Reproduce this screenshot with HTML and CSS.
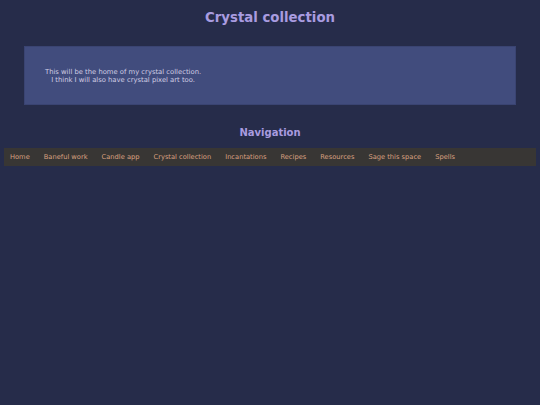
FILE: index.html
```html
<!DOCTYPE html>
<html lang="en">
<head>
    <meta charset="UTF-8">
    <meta name="viewport" content="width=device-width, initial-scale=1.0">
    <title>Crystal collection</title>
    <link rel="stylesheet" href="styles.css">
</head>
<body>

<h1 class="title">Crystal collection</h1>

<div class="content">
    <p class="intro">This will be the home of my crystal collection.<br>I think I will also have crystal pixel art too.</p>
</div>

<h2 class="nav-title">Navigation</h2>

<nav class="nav">
    <a href="#">Home</a>
    <a href="#">Baneful work</a>
    <a href="#">Candle app</a>
    <a href="#">Crystal collection</a>
    <a href="#">Incantations</a>
    <a href="#">Recipes</a>
    <a href="#">Resources</a>
    <a href="#">Sage this space</a>
    <a href="#">Spells</a>
</nav>

</body>
</html>
```

FILE: styles.css
```css
body {
    font-family: "DejaVu Sans", Verdana, sans-serif;
    margin: 0;
    padding: 0 4px;
    background: #262c4a;
    color: #c8c8dc;
}

.title {
    margin: 0;
    padding-top: 9px;
    font-size: 13.3px;
    line-height: 18px;
    text-align: center;
    color: #a99ce0;
}

.content {
    margin: 19px 20px 0;
    background: #414c7d;
    border: 1px solid #3a4472;
    height: 57px;
    display: flex;
    align-items: center;
    padding-left: 20px;
}

.intro {
    margin: 0;
    display: inline-block;
    text-align: center;
    font-size: 6.8px;
    line-height: 8px;
    color: #d0cce4;
}

.nav-title {
    margin: 21px 0 0;
    font-size: 10px;
    line-height: 14px;
    text-align: center;
    color: #a99ce0;
}

.nav {
    margin-top: 8px;
    background: #383634;
    height: 18px;
    display: flex;
    align-items: center;
    gap: 14px;
    padding-left: 6px;
}

.nav a {
    color: #d8a080;
    text-decoration: none;
    font-size: 6.7px;
}
```
